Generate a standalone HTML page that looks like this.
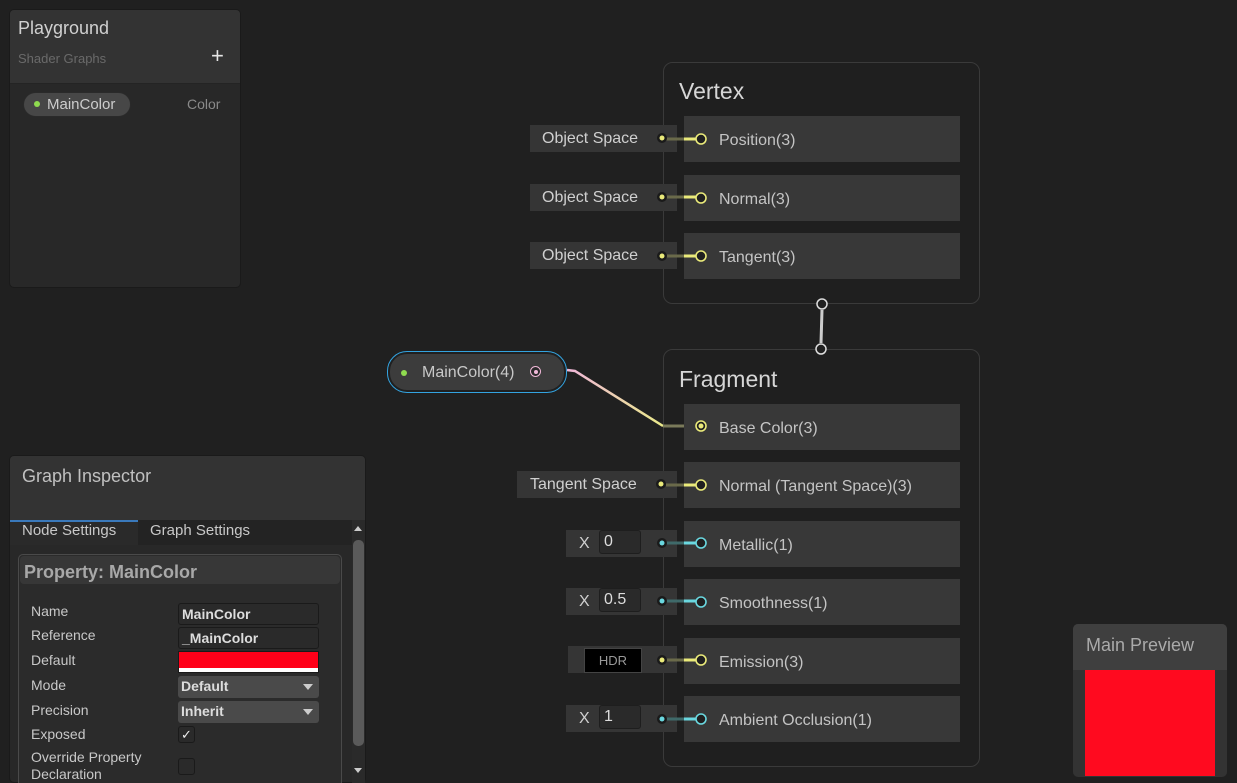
<!DOCTYPE html>
<html><head><style>
*{margin:0;padding:0;box-sizing:border-box}
html,body{overflow:hidden}
body{width:1237px;height:783px;background:#202020;font-family:"Liberation Sans",sans-serif;position:relative;overflow:hidden;color:#c8c8c8}
.a{position:absolute}
.row{position:absolute;left:684px;width:276px;height:46px;background:#383838;font-size:16px;color:#c4c4c4;padding-left:35px;line-height:50px}
.inb{position:absolute;background:#353535;height:27px;font-size:16px;color:#d0d0d0;line-height:27px}
.lab{position:absolute;left:31px;font-size:14px;color:#c8c8c8}
.fld{position:absolute;left:178px;width:141px;height:22px;background:#2a2a2a;border:1px solid #1a1a1a;border-radius:3px;font-size:14px;font-weight:bold;color:#ddd;padding-left:3px;line-height:20px}
.dd{background:#4a4a4a;border:none}
.dd:after{content:"";position:absolute;right:6px;top:8px;border-left:5px solid transparent;border-right:5px solid transparent;border-top:6px solid #ccc}
.xf{position:absolute;width:42px;height:24px;background:#2a2a2a;border:1px solid #1e1e1e;border-radius:3px;font-size:16px;color:#ddd;padding-left:4px;line-height:22px}
</style></head><body>
<div class="a" style="left:9px;top:9px;width:232px;height:279px;background:#282828;border:1px solid #1a1a1a;border-radius:5px;overflow:hidden">
 <div style="height:74px;background:#333;border-bottom:1px solid #242424"></div>
</div>
<div class="a" style="left:18px;top:18px;font-size:18px;color:#d0d0d0">Playground</div>
<div class="a" style="left:18px;top:51px;font-size:13px;color:#6a6a6a">Shader Graphs</div>
<div class="a" style="left:211px;top:43px;font-size:22px;color:#e6e6e6">+</div>
<div class="a" style="left:23px;top:92px;width:108px;height:25px;background:#474747;border:1px solid #2a2a2a;border-radius:13px;font-size:15px;color:#ccc;line-height:23px;padding-left:23px">MainColor</div>
<div class="a" style="left:34px;top:101px;width:6px;height:6px;border-radius:50%;background:#8fdb4f"></div>
<div class="a" style="left:187px;top:96px;font-size:14px;color:#8a8a8a">Color</div>

<svg class="a" style="left:0;top:0" width="1237" height="783">
<defs><linearGradient id="g" x1="0" y1="0" x2="1" y2="1"><stop offset="0" stop-color="#f0b8d8"/><stop offset="1" stop-color="#eaea8a"/></linearGradient></defs>
<rect x="663.5" y="62.5" width="316" height="241" rx="9" fill="#1f1f1f" stroke="#3a3a3a"/>
<rect x="663.5" y="349.5" width="316" height="417" rx="9" fill="#1f1f1f" stroke="#3a3a3a"/>
<path d="M822 310 L821 343" stroke="#ccc" stroke-width="3"/>
<circle cx="822" cy="304" r="5" fill="#202020" stroke="#ddd" stroke-width="1.5"/>
<circle cx="821" cy="349" r="5" fill="#202020" stroke="#ddd" stroke-width="1.5"/>
<path d="M567 370 L575 371 L663 426" stroke="url(#g)" stroke-width="2.5" fill="none"/>
<path d="M663 426 L684 426" stroke="#7a7a5a" stroke-width="3"/>
</svg>

<div class="a" style="left:679px;top:78px;font-size:23px;color:#d6d6d6">Vertex</div>
<div class="a" style="left:679px;top:366px;font-size:23px;color:#d6d6d6">Fragment</div>

<div class="row" style="top:116px">Position(3)</div>
<div class="row" style="top:175px">Normal(3)</div>
<div class="row" style="top:233px">Tangent(3)</div>
<div class="row" style="top:404px">Base Color(3)</div>
<div class="row" style="top:462px">Normal (Tangent Space)(3)</div>
<div class="row" style="top:521px">Metallic(1)</div>
<div class="row" style="top:579px">Smoothness(1)</div>
<div class="row" style="top:638px">Emission(3)</div>
<div class="row" style="top:696px">Ambient Occlusion(1)</div>

<div class="inb" style="left:530px;top:125px;width:147px;padding-left:12px">Object Space</div>
<div class="inb" style="left:530px;top:184px;width:147px;padding-left:12px">Object Space</div>
<div class="inb" style="left:530px;top:242px;width:147px;padding-left:12px">Object Space</div>
<div class="inb" style="left:517px;top:471px;width:160px;padding-left:13px">Tangent Space</div>
<div class="inb" style="left:566px;top:530px;width:111px;padding-left:13px">X</div>
<div class="xf" style="left:599px;top:530px">0</div>
<div class="inb" style="left:566px;top:588px;width:111px;padding-left:13px">X</div>
<div class="xf" style="left:599px;top:588px">0.5</div>
<div class="inb" style="left:568px;top:646px;width:109px"></div>
<div class="a" style="left:584px;top:648px;width:58px;height:25px;background:#000;border:1px solid #444;font-size:13px;color:#999;text-align:center;line-height:23px">HDR</div>
<div class="inb" style="left:566px;top:705px;width:111px;padding-left:13px">X</div>
<div class="xf" style="left:599px;top:705px">1</div>

<svg class="a" style="left:0;top:0" width="1237" height="783">
<g stroke-width="3">
<path d="M666 139H684" stroke="#6a6a4a"/><path d="M684 139H697" stroke="#eaea7a"/>
<path d="M666 197H684" stroke="#6a6a4a"/><path d="M684 197H697" stroke="#eaea7a"/>
<path d="M666 256H684" stroke="#6a6a4a"/><path d="M684 256H697" stroke="#eaea7a"/>
<path d="M666 485H684" stroke="#6a6a4a"/><path d="M684 485H697" stroke="#eaea7a"/>
<path d="M666 660H684" stroke="#6a6a4a"/><path d="M684 660H697" stroke="#eaea7a"/>
<path d="M666 543H684" stroke="#3f6a6a"/><path d="M684 543H697" stroke="#6ad8e0"/>
<path d="M666 601H684" stroke="#3f6a6a"/><path d="M684 601H697" stroke="#6ad8e0"/>
<path d="M666 719H684" stroke="#3f6a6a"/><path d="M684 719H697" stroke="#6ad8e0"/>
</g>
<g fill="#202020" stroke-width="1.6">
<circle cx="701" cy="139" r="5" stroke="#eaea7a"/><circle cx="701" cy="198" r="5" stroke="#eaea7a"/><circle cx="701" cy="256" r="5" stroke="#eaea7a"/>
<circle cx="701" cy="485" r="5" stroke="#eaea7a"/><circle cx="701" cy="660" r="5" stroke="#eaea7a"/>
<circle cx="701" cy="543" r="5" stroke="#6ad8e0"/><circle cx="701" cy="602" r="5" stroke="#6ad8e0"/><circle cx="701" cy="719" r="5" stroke="#6ad8e0"/>
<circle cx="701" cy="426" r="5" stroke="#eaea7a"/>
</g>
<circle cx="701" cy="426" r="2.5" fill="#eaea7a"/>
<g>
<circle cx="662" cy="138" r="5" fill="#1a1a1a"/><circle cx="662" cy="138" r="2.5" fill="#eaea7a"/>
<circle cx="662" cy="197" r="5" fill="#1a1a1a"/><circle cx="662" cy="197" r="2.5" fill="#eaea7a"/>
<circle cx="662" cy="256" r="5" fill="#1a1a1a"/><circle cx="662" cy="256" r="2.5" fill="#eaea7a"/>
<circle cx="661" cy="484" r="5" fill="#1a1a1a"/><circle cx="661" cy="484" r="2.5" fill="#eaea7a"/>
<circle cx="662" cy="660" r="5" fill="#1a1a1a"/><circle cx="662" cy="660" r="2.5" fill="#eaea7a"/>
<circle cx="662" cy="543" r="5" fill="#1a1a1a"/><circle cx="662" cy="543" r="2.5" fill="#6ad8e0"/>
<circle cx="662" cy="601" r="5" fill="#1a1a1a"/><circle cx="662" cy="601" r="2.5" fill="#6ad8e0"/>
<circle cx="662" cy="719" r="5" fill="#1a1a1a"/><circle cx="662" cy="719" r="2.5" fill="#6ad8e0"/>
</g>
</svg>

<div class="a" style="left:387px;top:351px;width:180px;height:42px;border:1.5px solid #33a3e0;border-radius:20px;padding:2px">
 <div style="width:100%;height:100%;background:#3c3c3c;border-radius:17px;font-size:16px;color:#c8c8c8;line-height:38px;padding-left:32px">MainColor(4)</div>
</div>
<div class="a" style="left:401px;top:370px;width:6px;height:6px;border-radius:50%;background:#8fdb4f"></div>
<div class="a" style="left:530px;top:366px;width:11px;height:11px;border-radius:50%;border:1.5px solid #f0b8d8;background:#2a2a2a"></div>
<div class="a" style="left:533.5px;top:369.5px;width:4px;height:4px;border-radius:50%;background:#f0b8d8"></div>

<div class="a" style="left:9px;top:455px;width:357px;height:328px;background:#282828;border:1px solid #1a1a1a;border-radius:5px;overflow:hidden">
 <div style="height:64px;background:#333"></div>
 <div style="height:25px;background:#232323;position:relative">
  <div style="position:absolute;left:0;top:0;width:128px;height:25px;background:#2a2a2a;border-top:2px solid #3a79bb"></div>
 </div>
</div>
<div class="a" style="left:22px;top:466px;font-size:18px;color:#c0c0c0">Graph Inspector</div>
<div class="a" style="left:22px;top:522px;font-size:15px;color:#c8c8c8">Node Settings</div>
<div class="a" style="left:150px;top:522px;font-size:15px;color:#c8c8c8">Graph Settings</div>
<div class="a" style="left:352px;top:520px;width:13px;height:263px;background:#2a2a2a"></div>
<div class="a" style="left:353px;top:540px;width:11px;height:206px;background:#5a5a5a;border-radius:5px"></div>
<div class="a" style="left:354px;top:526px;border-left:4px solid transparent;border-right:4px solid transparent;border-bottom:5px solid #ccc"></div>
<div class="a" style="left:354px;top:768px;border-left:4px solid transparent;border-right:4px solid transparent;border-top:5px solid #ccc"></div>
<div class="a" style="left:18px;top:554px;width:324px;height:229px;border:1px solid #4a4a4a;border-bottom:none;border-radius:5px 5px 0 0;background:#2b2b2b"></div>
<div class="a" style="left:20px;top:556px;width:320px;height:28px;background:#373737;border-radius:4px;font-size:18px;font-weight:bold;color:#a8a8a8;padding-left:4px;line-height:32px">Property: MainColor</div>
<div class="lab" style="top:603px">Name</div>
<div class="lab" style="top:627px">Reference</div>
<div class="lab" style="top:652px">Default</div>
<div class="lab" style="top:677px">Mode</div>
<div class="lab" style="top:702px">Precision</div>
<div class="lab" style="top:726px">Exposed</div>
<div class="lab" style="top:749px;line-height:17px">Override Property<br>Declaration</div>
<div class="fld" style="top:603px">MainColor</div>
<div class="fld" style="top:627px">_MainColor</div>
<div class="a" style="left:178px;top:651px;width:141px;height:22px;background:#1a1a1a;padding:1px"><div style="height:16px;background:#ff0019"></div><div style="height:4px;background:#fff"></div></div>
<div class="fld dd" style="top:676px">Default</div>
<div class="fld dd" style="top:701px">Inherit</div>
<div class="a" style="left:178px;top:726px;width:17px;height:17px;background:#2a2a2a;border:1px solid #1a1a1a;border-radius:3px;font-size:13px;color:#eee;text-align:center;line-height:15px">✓</div>
<div class="a" style="left:178px;top:758px;width:17px;height:17px;background:#2a2a2a;border:1px solid #1a1a1a;border-radius:3px"></div>

<div class="a" style="left:1073px;top:624px;width:154px;height:153px;background:#333;border-radius:5px;overflow:hidden">
 <div style="height:46px;background:#3f3f3f"></div>
</div>
<div class="a" style="left:1086px;top:635px;font-size:18px;color:#aaa">Main Preview</div>
<div class="a" style="left:1085px;top:670px;width:130px;height:106px;background:#ff0a1f"></div>
</body></html>
